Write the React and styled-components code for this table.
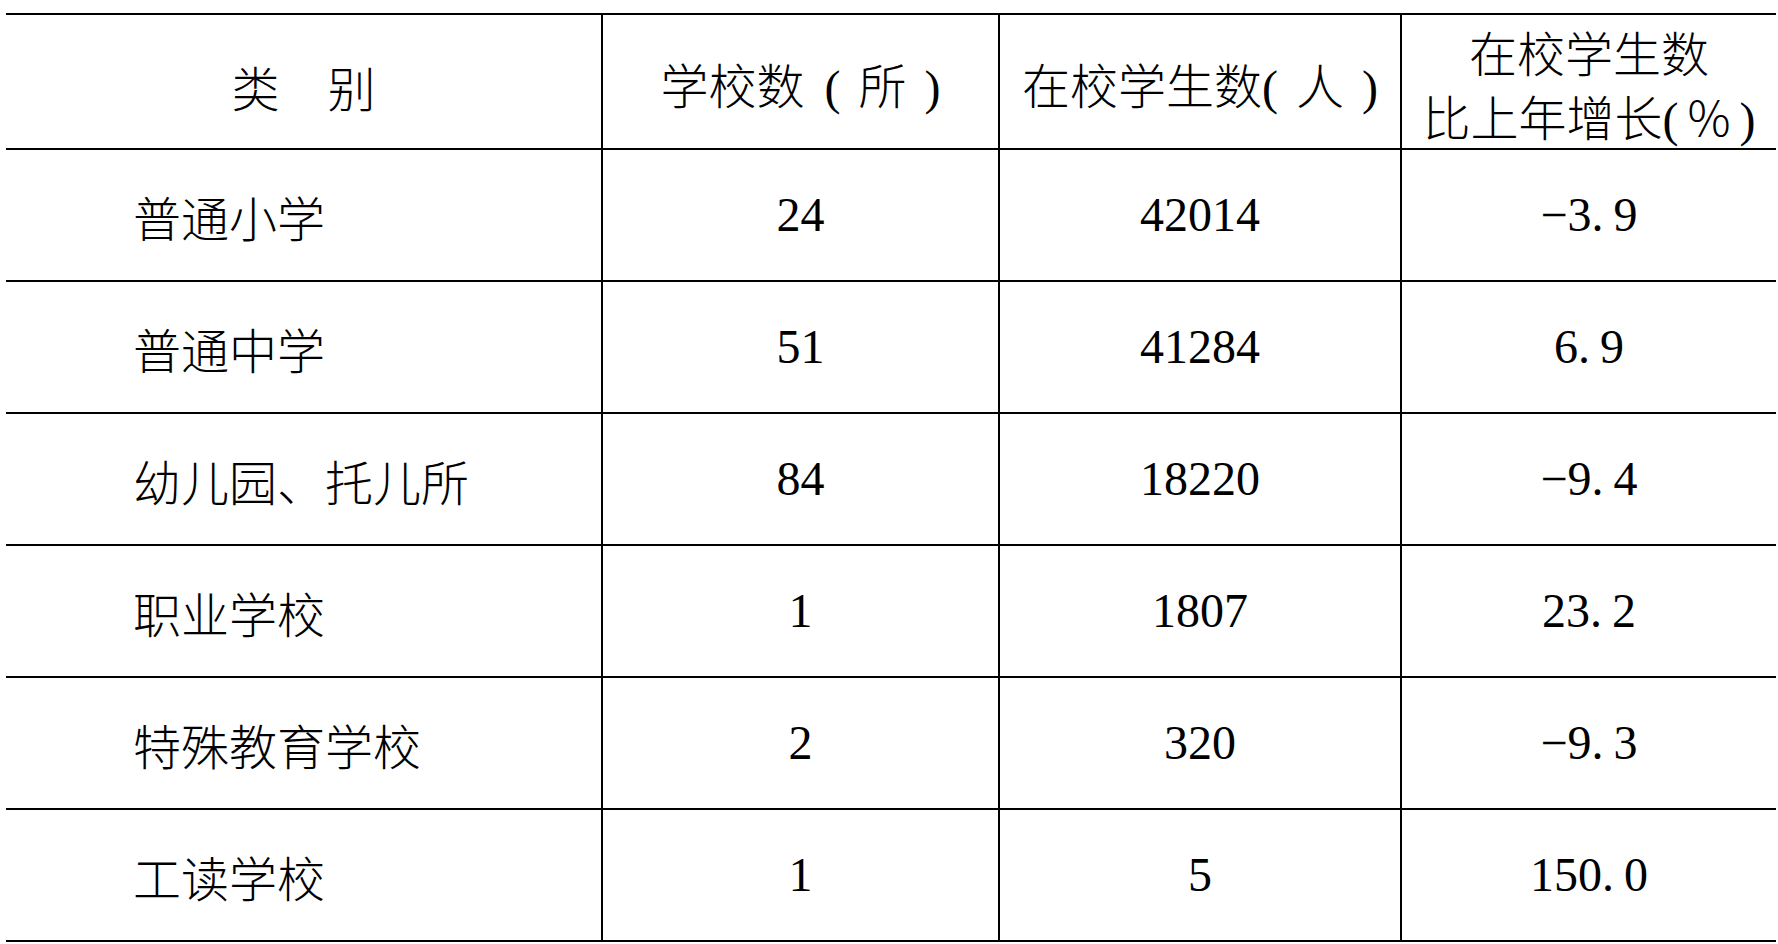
import React from "react";
import styled, { createGlobalStyle } from "styled-components";

const Global = createGlobalStyle`
  html, body { margin: 0; padding: 0; background: #fff; }
  body { font-family: "Liberation Serif", "Noto Sans CJK SC", serif; color: #000; }
`;

const Page = styled.div`
  padding: 13px 2px 0 6px;
`;

const Grid = styled.div`
  display: grid;
  width: 1770px;
  grid-template-columns: 595px 397px 402px 376px;
  grid-template-rows: 137px repeat(6, 132px);
`;

const Cell = styled.div`
  display: flex;
  align-items: center;
  justify-content: ${(p) => (p.$left ? "flex-start" : "center")};
  padding-left: ${(p) => (p.$left ? "127px" : "0")};
  border-bottom: 2px solid #000;
  border-top: ${(p) => (p.$head ? "2px solid #000" : "none")};
  border-left: ${(p) => (p.$first ? "none" : "2px solid #000")};
  font-size: 48px;
  font-weight: 300;
  line-height: 64px;
  white-space: nowrap;
  text-align: center;
  box-sizing: border-box;
`;

const HeadText = styled.div`
  font-family: "Noto Sans CJK SC", sans-serif;
  font-weight: 300;
  line-height: 64px;
  padding-top: 8px;
`;

const Paren = styled.span`
  font-family: "Liberation Serif", serif;
  font-weight: 400;
  margin-left: ${(p) => p.$lead || 0}px;
`;

const Inner = styled.span`
  display: inline-block;
  margin: 0 ${(p) => p.$gap}px;
`;

const CjkText = styled.span`
  font-family: "Noto Sans CJK SC", sans-serif;
  font-weight: 300;
  padding-top: 2px;
`;

const Num = styled.span`
  font-family: "Liberation Serif", serif;
  font-weight: 400;
`;

const Dot = styled.span`
  margin-right: 10px;
`;

const rows = [
  ["普通小学", "24", "42014", "−3.9"],
  ["普通中学", "51", "41284", "6.9"],
  ["幼儿园、托儿所", "84", "18220", "−9.4"],
  ["职业学校", "1", "1807", "23.2"],
  ["特殊教育学校", "2", "320", "−9.3"],
  ["工读学校", "1", "5", "150.0"],
];

function Pct({ value }) {
  const [a, b] = value.split(".");
  return (
    <Num>
      {a}
      <Dot>.</Dot>
      {b}
    </Num>
  );
}

function Unit({ children, gap, lead }) {
  return (
    <>
      <Paren $lead={lead}>(</Paren>
      <Inner $gap={gap}>{children}</Inner>
      <Paren>)</Paren>
    </>
  );
}

export default function App() {
  return (
    <Page>
      <Global />
      <Grid>
        <Cell $head $first>
          <HeadText>类　别</HeadText>
        </Cell>
        <Cell $head>
          <HeadText>
            学校数<Unit gap={18} lead={20}>所</Unit>
          </HeadText>
        </Cell>
        <Cell $head>
          <HeadText>
            在校学生数<Unit gap={18}>人</Unit>
          </HeadText>
        </Cell>
        <Cell $head>
          <HeadText>
            在校学生数
            <br />
            比上年增长<Unit gap={9}>%</Unit>
          </HeadText>
        </Cell>
        {rows.map((r) => (
          <React.Fragment key={r[0]}>
            <Cell $first $left>
              <CjkText>{r[0]}</CjkText>
            </Cell>
            <Cell>
              <Num>{r[1]}</Num>
            </Cell>
            <Cell>
              <Num>{r[2]}</Num>
            </Cell>
            <Cell>
              <Pct value={r[3]} />
            </Cell>
          </React.Fragment>
        ))}
      </Grid>
    </Page>
  );
}
